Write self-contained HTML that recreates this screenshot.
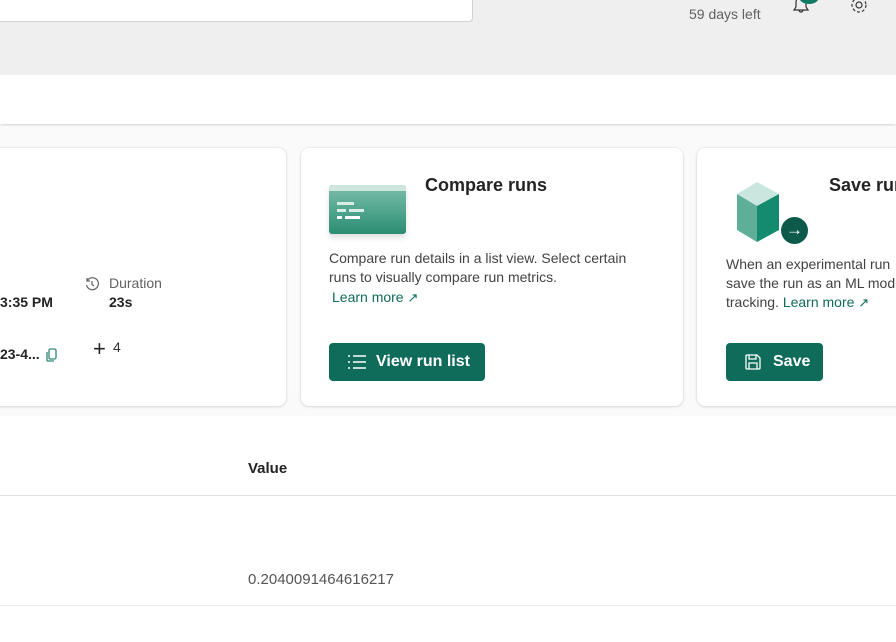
<!DOCTYPE html>
<html><head><style>
*{box-sizing:border-box;margin:0;padding:0}
body{width:896px;height:642px;overflow:hidden;background:#fff;font-family:"Segoe UI","Liberation Sans",sans-serif;color:#242424;position:relative}
.top{position:absolute;left:0;top:0;width:896px;height:75px;background:#efefef}
.search{position:absolute;left:-10px;top:-10px;width:483px;height:32px;background:#fff;border:1px solid #d1d1d1;border-radius:4px}
.band{position:absolute;left:0;top:75px;width:896px;height:49px;background:#fff;box-shadow:0 2px 3px rgba(0,0,0,.15)}
.area{position:absolute;left:0;top:126px;width:896px;height:290px;background:#fafafa}
.card{position:absolute;top:148px;height:258px;background:#fff;border-radius:8px;box-shadow:0 0 2px rgba(0,0,0,.12),0 1px 3px rgba(0,0,0,.1)}
.t{position:absolute;font-size:14px;white-space:nowrap}
.btn{position:absolute;background:#0f6b5a;color:#fff;border-radius:4px;font-size:16px;font-weight:600;height:38px;top:343px;display:flex;align-items:center}
.link{color:#0f6b5a}
</style></head><body>
<div class="top"><div class="search"></div>
<div class="t" style="left:689px;top:6px;color:#616161">59 days left</div>
<svg style="position:absolute;left:790px;top:-6px" width="22" height="22" viewBox="0 0 22 22"><path d="M4 16h14l-2-3V8a5 5 0 0 0-10 0v5z M9 16a2 2 0 0 0 4 0" fill="none" stroke="#333" stroke-width="1.2"/></svg>
<div style="position:absolute;left:799px;top:-10px;width:20px;height:14px;border-radius:50%;background:#0f7b62"></div>
<svg style="position:absolute;left:848px;top:-6px" width="22" height="22" viewBox="0 0 22 22"><circle cx="11" cy="11" r="3" fill="none" stroke="#333" stroke-width="1.2"/><circle cx="11" cy="11" r="7" fill="none" stroke="#333" stroke-width="1.2" stroke-dasharray="3 2"/></svg>
</div>
<div class="band"></div>
<div class="area"></div>
<div class="card" style="left:-20px;width:306px"></div>
<div class="card" style="left:301px;width:382px"></div>
<div class="card" style="left:697px;width:220px"></div>

<svg style="position:absolute;left:84px;top:276px" width="16" height="16" viewBox="0 0 16 16"><path d="M3 5a6 6 0 1 1-0.5 4M3 2v3h3M8 5v3.5l2 1.5" fill="none" stroke="#616161" stroke-width="1.2"/></svg>
<div class="t" style="left:109px;top:275px;color:#616161">Duration</div>
<div class="t" style="left:109px;top:294px;font-weight:700">23s</div>
<div class="t" style="left:0;top:294px;font-weight:700">3:35 PM</div>
<div class="t" style="left:0;top:346px;font-weight:600">23-4...</div>
<svg style="position:absolute;left:46px;top:348px" width="12" height="14" viewBox="0 0 12 14"><rect x="3" y="1" width="7" height="10" rx="1.5" fill="none" stroke="#2d8a74" stroke-width="1.3"/><path d="M1 4v8a1 1 0 0 0 1 1h6" fill="none" stroke="#2d8a74" stroke-width="1.3"/></svg>
<div class="t" style="left:93px;top:336px;font-size:22px;font-weight:300">+</div>
<div class="t" style="left:113px;top:339px;color:#333">4</div>

<div style="position:absolute;left:329px;top:185px;width:77px;height:49px;border-radius:3px;background:linear-gradient(180deg,#7cbfac,#2a8d72);box-shadow:0 4px 6px rgba(0,0,0,.12)">
<div style="position:absolute;left:0;top:0;width:77px;height:6px;background:#cfe6df;border-radius:3px 3px 0 0"></div>
<div style="position:absolute;left:8px;top:17px;width:17px;height:3px;background:#d8ede6"></div>
<div style="position:absolute;left:8px;top:24px;width:9px;height:3px;background:#d8ede6"></div>
<div style="position:absolute;left:20px;top:24px;width:15px;height:3px;background:#d8ede6"></div>
<div style="position:absolute;left:8px;top:31px;width:5px;height:3px;background:#fff"></div>
<div style="position:absolute;left:16px;top:31px;width:15px;height:3px;background:#fff"></div>
</div>
<div class="t" style="left:425px;top:175px;font-size:18px;font-weight:600">Compare runs</div>
<div class="t" style="left:329px;top:250px;color:#424242">Compare run details in a list view. Select certain</div>
<div class="t" style="left:329px;top:269px;color:#424242">runs to visually compare run metrics.</div>
<div class="t link" style="left:332px;top:289px">Learn more <span style="font-size:13px">↗</span></div>
<div class="btn" style="left:329px;width:156px;padding-left:18px">
<svg width="20" height="16" viewBox="0 0 20 16"><g stroke="#fff" stroke-width="1.4"><path d="M6 2h13M6 8h13M6 14h13"/><path d="M1 2h2M1 8h2M1 14h2"/></g></svg>
<span style="margin-left:9px">View run list</span></div>

<div style="position:absolute;left:735px;top:180px;width:60px;height:64px">
<svg width="60" height="64" viewBox="0 0 60 64"><path d="M2 14L22 2l22 12-22 12z" fill="#c9e6df"/><path d="M2 14l20 12v36L2 50z" fill="#5fae98"/><path d="M22 26l22-12v36L22 62z" fill="#148a6e"/></svg>
</div>
<div style="position:absolute;left:781px;top:217px;width:27px;height:27px;border-radius:50%;background:#0d5a4b;color:#fff;font-size:17px;text-align:center;line-height:26px;font-weight:700">→</div>
<div class="t" style="left:829px;top:175px;font-size:18px;font-weight:600">Save run</div>
<div class="t" style="left:726px;top:256px;color:#424242">When an experimental run</div>
<div class="t" style="left:726px;top:275px;color:#424242">save the run as an ML mod</div>
<div class="t" style="left:726px;top:294px;color:#424242">tracking. <span class="link">Learn more <span style="font-size:13px">↗</span></span></div>
<div class="btn" style="left:726px;width:97px;padding-left:18px">
<svg width="18" height="18" viewBox="0 0 18 18"><path d="M2 3a1 1 0 0 1 1-1h10l3 3v10a1 1 0 0 1-1 1H3a1 1 0 0 1-1-1z M5 2v4h7V2 M5 16v-6h8v6" fill="none" stroke="#fff" stroke-width="1.3"/></svg>
<span style="margin-left:11px">Save</span></div>

<div class="t" style="left:248px;top:460px;font-size:15px;font-weight:600">Value</div>
<div style="position:absolute;left:0;top:495px;width:896px;height:1px;background:#e0e0e0"></div>
<div class="t" style="left:248px;top:571px;font-size:15px;color:#555">0.2040091464616217</div>
<div style="position:absolute;left:0;top:605px;width:896px;height:1px;background:#ebebeb"></div>
</body></html>
